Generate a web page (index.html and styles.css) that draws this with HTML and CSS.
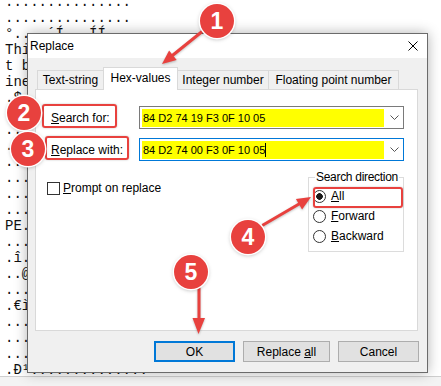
FILE: index.html
```html
<!DOCTYPE html>
<html lang="en">

<head>
    <meta charset="UTF-8">
    <meta name="viewport" content="width=device-width, initial-scale=1.0">
    <title>Replace</title>
    <link rel="stylesheet" href="styles.css">
</head>

<body>
    <div class="screen">
        <!-- hex dump behind the dialog (only the uncovered columns matter) -->
        <pre class="dump">...............
...............
°..  ´Í.. ÍÍ..
Thi
t b
ine
.$.
...
...
...
...
...
...
...
PE.
...
.î.
..@
...
.€ì
...
...
...
.Ð¹..............</pre>
        <div class="status"></div>

        <div class="dialog">
            <div class="titlebar">
                <span>Replace</span>
                <svg class="close" width="10" height="10" viewBox="0 0 10 10">
                    <path d="M0.5 0.5L9.5 9.5M9.5 0.5L0.5 9.5" stroke="#000" stroke-width="1" fill="none" />
                </svg>
            </div>

            <div class="dialog-body">
                <div class="tabs">
                    <div class="tab tab-text">Text-string</div>
                    <div class="tab tab-hex active">Hex-values</div>
                    <div class="tab tab-int">Integer number</div>
                    <div class="tab tab-float">Floating point number</div>
                </div>

                <div class="panel">
                    <div class="fields">
                        <label class="lbl"><u>S</u>earch for:</label>
                        <div class="combo">
                            <span class="value">84 D2 74 19 F3 0F 10 05</span>
                            <svg class="chev" width="9" height="5" viewBox="0 0 9 5">
                                <polyline points="0.5,0.5 4.5,4.5 8.5,0.5" fill="none" stroke="#555" stroke-width="1" />
                            </svg>
                        </div>

                        <label class="lbl"><u>R</u>eplace with:</label>
                        <div class="combo focused">
                            <span class="value">84 D2 74 00 F3 0F 10 05<i class="caret"></i></span>
                            <svg class="chev" width="9" height="5" viewBox="0 0 9 5">
                                <polyline points="0.5,0.5 4.5,4.5 8.5,0.5" fill="none" stroke="#555" stroke-width="1" />
                            </svg>
                        </div>
                    </div>

                    <div class="options">
                        <label class="check"><span class="box"></span><span><u>P</u>rompt on replace</span></label>

                        <fieldset class="direction">
                            <legend>Search direction</legend>
                            <div class="radio"><span class="dot on"></span><span><u>A</u>ll</span></div>
                            <div class="radio"><span class="dot"></span><span><u>F</u>orward</span></div>
                            <div class="radio"><span class="dot"></span><span><u>B</u>ackward</span></div>
                        </fieldset>
                    </div>
                </div>

                <div class="buttons">
                    <button class="btn btn-ok">OK</button>
                    <button class="btn btn-all">Replace <u>a</u>ll</button>
                    <button class="btn btn-cancel">Cancel</button>
                </div>
            </div>
        </div>

        <!-- tutorial annotations -->
        <div class="hl hl-search"></div>
        <div class="hl hl-replace"></div>
        <div class="hl hl-all"></div>

        <svg class="arrows" width="441" height="386" viewBox="0 0 441 386">
            <g stroke="#e8413e" stroke-width="3" stroke-linecap="round" fill="#e8413e">
                <line x1="204" y1="30" x2="173" y2="55" />
                <polygon stroke="none" points="162,64 176.7,59.9 169.1,50.5" />
                <line x1="263" y1="225" x2="299" y2="204" />
                <polygon stroke="none" points="311,197 302.1,209.4 295.9,199" />
                <line x1="199" y1="288" x2="199" y2="319" />
                <polygon stroke="none" points="198.5,334 192.5,318 205,318" />
            </g>
        </svg>

        <div class="badge b1">1</div>
        <div class="badge b2">2</div>
        <div class="badge b3">3</div>
        <div class="badge b4">4</div>
        <div class="badge b5">5</div>
    </div>
</body>

</html>
```

FILE: styles.css
```css
body {
    margin: 0;
    background-color: #ffffff;
    font-family: 'Liberation Sans', Arial, sans-serif;
    font-size: 12px;
    color: #000;
}

.screen {
    position: relative;
    width: 441px;
    height: 386px;
    overflow: hidden;
}

/* hex dump text in the window behind */
.dump {
    margin: -6px 0 0 0;
    padding-left: 5px;
    height: 382px;
    overflow: hidden;
    font-family: 'Liberation Mono', 'Courier New', monospace;
    font-size: 14px;
    line-height: 16px;
    color: #111;
}

.status {
    height: 9px;
    border-top: 1px solid #cfcfcf;
    background-color: #f3f3f3;
}

/* the Replace dialog */
.dialog {
    position: absolute;
    left: 27px;
    top: 33px;
    width: 401px;
    height: 340px;
    box-sizing: border-box;
    border: 1px solid #6b6b6b;
    background-color: #f0f0f0;
    box-shadow: 0 0 12px rgba(0, 0, 0, 0.3);
}

.titlebar {
    height: 24px;
    background-color: #ffffff;
    display: flex;
    align-items: center;
    justify-content: space-between;
    padding: 0 9px 0 2px;
}

.dialog-body {
    padding: 9px 9px 10px 7px;
}

.tabs {
    display: flex;
    align-items: flex-end;
    height: 22px;
    padding-left: 2px;
    position: relative;
    z-index: 1;
}

.tab {
    height: 19px;
    box-sizing: border-box;
    display: flex;
    align-items: center;
    justify-content: center;
    border: 1px solid #d9d9d9;
    border-bottom: none;
    margin-right: -1px;
    background-color: #f0f0f0;
}

.tab.active {
    height: 23px;
    margin-bottom: -1px;
    padding-bottom: 2px;
    background-color: #ffffff;
    position: relative;
    z-index: 2;
}

.tab-text { width: 67px; }
.tab-hex { width: 75px; }
.tab-int { width: 92px; }
.tab-float { width: 131px; }

.panel {
    height: 242px;
    box-sizing: border-box;
    border: 1px solid #d9d9d9;
    background-color: #ffffff;
    padding: 16px 13px 0 11px;
}

.fields {
    display: grid;
    grid-template-columns: 92px 265px;
    grid-auto-rows: 23px;
    row-gap: 9px;
}

.lbl {
    align-self: center;
    padding-left: 4px;
}

.combo {
    display: flex;
    align-items: center;
    box-sizing: border-box;
    border: 1px solid #7a7a7a;
    background-color: #ffffff;
}

.combo.focused {
    border-color: #0078d7;
}

.combo .value {
    width: 241px;
    height: 18px;
    margin-left: 2px;
    padding-left: 1px;
    background-color: #ffff00;
    font-size: 11px;
    line-height: 18px;
    white-space: nowrap;
}

.caret {
    display: inline-block;
    width: 1px;
    height: 14px;
    background-color: #000;
    vertical-align: -3px;
}

.chev {
    margin-left: auto;
    margin-right: 4px;
}

.options {
    display: flex;
    justify-content: space-between;
    align-items: flex-start;
    margin-top: 9px;
}

.check {
    display: flex;
    align-items: center;
    gap: 3px;
    margin-top: 11px;
    white-space: nowrap;
}

.box {
    width: 13px;
    height: 13px;
    box-sizing: border-box;
    border: 1px solid #333;
    background-color: #fff;
}

.direction {
    width: 96px;
    box-sizing: border-box;
    margin: 0;
    padding: 2px 4px 5px 4px;
    border: 1px solid #dcdcdc;
}

.direction legend {
    padding: 0 1px;
    margin-left: 2px;
    line-height: 14px;
    letter-spacing: -0.3px;
    white-space: nowrap;
}

.radio {
    height: 20px;
    display: flex;
    align-items: center;
    gap: 5px;
}

.dot {
    width: 13px;
    height: 13px;
    box-sizing: border-box;
    border: 1px solid #333;
    border-radius: 50%;
    background-color: #fff;
}

.dot.on {
    background: radial-gradient(circle, #1a1a1a 0 3px, #fff 3.6px);
}

.buttons {
    display: flex;
    justify-content: flex-end;
    gap: 8px;
    margin-top: 10px;
    margin-right: -1px;
}

.btn {
    height: 21px;
    padding: 0;
    box-sizing: border-box;
    border: 1px solid #adadad;
    background-color: #e1e1e1;
    font-family: 'Liberation Sans', Arial, sans-serif;
    font-size: 12px;
    color: #000;
}

.btn-ok {
    width: 81px;
    border: 2px solid #0078d7;
}

.btn-all { width: 87px; }
.btn-cancel { width: 81px; }

/* annotations */
.hl {
    position: absolute;
    box-sizing: border-box;
    border: 2.5px solid #e8413e;
    border-radius: 3px;
    box-shadow: 0 0 2px rgba(0, 0, 0, 0.25);
}

.hl-search { left: 42px; top: 104px; width: 75px; height: 24px; }
.hl-replace { left: 45px; top: 136px; width: 84px; height: 24px; }
.hl-all { left: 313px; top: 187px; width: 90px; height: 21px; }

.arrows {
    position: absolute;
    left: 0;
    top: 0;
    filter: drop-shadow(0 1px 1px rgba(0, 0, 0, 0.25));
}

.badge {
    position: absolute;
    width: 34px;
    height: 34px;
    border-radius: 50%;
    background-color: #e8413e;
    color: #fff;
    font-family: 'Liberation Sans', Arial, sans-serif;
    font-weight: bold;
    font-size: 23px;
    display: flex;
    align-items: center;
    justify-content: center;
    box-shadow: 0 0 0 1.5px #fff, 0 1px 4px rgba(0, 0, 0, 0.35);
}

.b1 { left: 200px; top: 4px; }
.b2 { left: 7px; top: 96px; }
.b3 { left: 11px; top: 132px; }
.b4 { left: 231px; top: 220px; }
.b5 { left: 174px; top: 255px; }
```
